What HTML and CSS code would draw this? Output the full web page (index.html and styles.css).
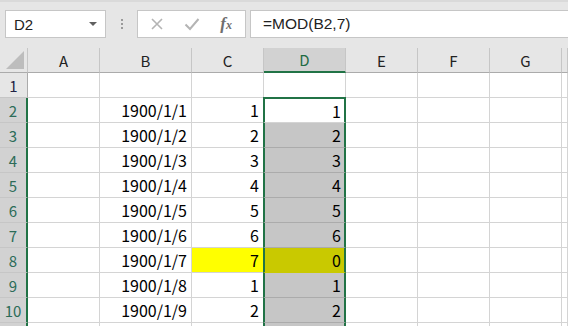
FILE: index.html
```html
<!DOCTYPE html>
<html lang="ja">
<head>
    <meta charset="UTF-8">
    <title>MOD</title>
    <link rel="stylesheet" href="styles.css">
</head>
<body>

    <div class="toolbar">
        <div class="name_box">
            <span>D2</span>
            <svg class="arrow" width="10" height="6" viewBox="0 0 10 6"><path d="M1 1h8L5 5z" fill="#606060"/></svg>
        </div>
        <div class="grip">
            <i></i><i></i><i></i>
        </div>
        <div class="fx_buttons">
            <svg width="14" height="14" viewBox="0 0 14 14"><path d="M2 2l10 10M12 2L2 12" stroke="#b4b4b4" stroke-width="1.6"/></svg>
            <svg width="16" height="14" viewBox="0 0 16 14"><path d="M1.5 7.5l4.5 4.5L14.5 2" stroke="#b4b4b4" stroke-width="2" fill="none"/></svg>
            <span class="fx">f<sub>x</sub></span>
        </div>
        <div class="formula">=MOD(B2,7)</div>
    </div>

    <div class="sheet">
        <div class="corner"><svg width="18" height="18" viewBox="0 0 18 18"><path d="M18 0V18H0z" fill="#bdbdbd"/></svg></div>
        <div class="col_head">A</div>
        <div class="col_head">B</div>
        <div class="col_head">C</div>
        <div class="col_head active">D</div>
        <div class="col_head">E</div>
        <div class="col_head">F</div>
        <div class="col_head">G</div>
        <div class="col_head"></div>

        <div class="row_head">1</div>
        <div class="cell"></div><div class="cell"></div><div class="cell"></div><div class="cell"></div>
        <div class="cell"></div><div class="cell"></div><div class="cell"></div><div class="cell"></div>

        <div class="row_head active">2</div>
        <div class="cell"></div><div class="cell">1900/1/1</div><div class="cell">1</div><div class="cell pick first">1</div>
        <div class="cell"></div><div class="cell"></div><div class="cell"></div><div class="cell"></div>

        <div class="row_head active">3</div>
        <div class="cell"></div><div class="cell">1900/1/2</div><div class="cell">2</div><div class="cell pick sel">2</div>
        <div class="cell"></div><div class="cell"></div><div class="cell"></div><div class="cell"></div>

        <div class="row_head active">4</div>
        <div class="cell"></div><div class="cell">1900/1/3</div><div class="cell">3</div><div class="cell pick sel">3</div>
        <div class="cell"></div><div class="cell"></div><div class="cell"></div><div class="cell"></div>

        <div class="row_head active">5</div>
        <div class="cell"></div><div class="cell">1900/1/4</div><div class="cell">4</div><div class="cell pick sel">4</div>
        <div class="cell"></div><div class="cell"></div><div class="cell"></div><div class="cell"></div>

        <div class="row_head active">6</div>
        <div class="cell"></div><div class="cell">1900/1/5</div><div class="cell">5</div><div class="cell pick sel">5</div>
        <div class="cell"></div><div class="cell"></div><div class="cell"></div><div class="cell"></div>

        <div class="row_head active">7</div>
        <div class="cell"></div><div class="cell">1900/1/6</div><div class="cell">6</div><div class="cell pick sel">6</div>
        <div class="cell"></div><div class="cell"></div><div class="cell"></div><div class="cell"></div>

        <div class="row_head active">8</div>
        <div class="cell"></div><div class="cell">1900/1/7</div><div class="cell yellow">7</div><div class="cell pick sel_yellow">0</div>
        <div class="cell"></div><div class="cell"></div><div class="cell"></div><div class="cell"></div>

        <div class="row_head active">9</div>
        <div class="cell"></div><div class="cell">1900/1/8</div><div class="cell">1</div><div class="cell pick sel">1</div>
        <div class="cell"></div><div class="cell"></div><div class="cell"></div><div class="cell"></div>

        <div class="row_head active">10</div>
        <div class="cell"></div><div class="cell">1900/1/9</div><div class="cell">2</div><div class="cell pick sel">2</div>
        <div class="cell"></div><div class="cell"></div><div class="cell"></div><div class="cell"></div>

        <div class="row_head active"></div>
        <div class="cell"></div><div class="cell"></div><div class="cell"></div><div class="cell pick sel"></div>
        <div class="cell"></div><div class="cell"></div><div class="cell"></div><div class="cell"></div>
    </div>

</body>
</html>
```

FILE: styles.css
```css
*,*::after,*::before{
    box-sizing: border-box;
    margin: 0;
    padding: 0;
}

body{
    width: 568px;
    height: 326px;
    overflow: hidden;
    background-color: #ffffff;
    font-family: "Noto Sans CJK JP", "Noto Sans", sans-serif;
    color: #000000;
}

.toolbar{
    display: flex;
    align-items: stretch;
    height: 48px;
    padding: 8px 0 10px 5px;
    background-color: #e6e6e6;
    border-top: 2px solid #dadada;
}

.name_box{
    display: flex;
    align-items: center;
    justify-content: space-between;
    width: 101px;
    padding: 0 7px 0 8px;
    background-color: #ffffff;
    border: 1px solid #c6c6c6;
    font-family: "Liberation Sans", sans-serif;
    font-size: 15px;
    color: #222222;
}

.grip{
    display: flex;
    flex-direction: column;
    justify-content: center;
    gap: 2px;
    width: 31px;
    align-items: center;
}

.grip i{
    display: block;
    width: 2px;
    height: 2px;
    background-color: #9a9a9a;
}

.fx_buttons{
    display: flex;
    align-items: center;
    justify-content: space-between;
    width: 109px;
    padding: 0 13px 0 12px;
    background-color: #ffffff;
    border: 1px solid #c6c6c6;
}

.fx{
    font-family: "Liberation Serif", serif;
    font-style: italic;
    font-weight: bold;
    font-size: 17px;
    color: #6e6e6e;
}

.fx sub{
    font-size: 12px;
    vertical-align: 0;
}

.formula{
    flex: 1;
    display: flex;
    align-items: center;
    margin-left: 4px;
    padding-left: 12px;
    background-color: #ffffff;
    border: 1px solid #c6c6c6;
    border-right: none;
    font-family: "Liberation Sans", sans-serif;
    font-size: 15.5px;
    color: #222222;
}

.sheet{
    display: grid;
    grid-template-columns: 28px 72px 92px 72px 82px 72px 72px 72px 6px;
    grid-template-rows: repeat(12, 25px);
    background-color: #ffffff;
}

.corner{
    display: flex;
    align-items: flex-end;
    justify-content: flex-end;
    padding: 0 3px 3px 0;
    background-color: #e6e6e6;
    border-right: 1px solid #c6c6c6;
    border-bottom: 1px solid #ababab;
}

.col_head{
    display: flex;
    align-items: center;
    justify-content: center;
    background-color: #e6e6e6;
    border-right: 1px solid #c6c6c6;
    border-bottom: 1px solid #ababab;
    font-size: 15px;
    color: #222222;
}

.col_head.active{
    background-color: #d2d2d2;
    border-bottom: 2px solid #217346;
    color: #1f6b43;
}

.row_head{
    display: flex;
    align-items: center;
    justify-content: center;
    background-color: #e6e6e6;
    border-right: 1px solid #ababab;
    border-bottom: 1px solid #c6c6c6;
    font-size: 15px;
    color: #222244;
}

.row_head.active{
    background-color: #d2d2d2;
    border-right: 2px solid #217346;
    color: #2c6c58;
}

.cell{
    display: flex;
    align-items: center;
    justify-content: flex-end;
    padding-right: 4px;
    border-right: 1px solid #d4d4d4;
    border-bottom: 1px solid #d4d4d4;
    font-size: 16px;
    line-height: 1;
}

.yellow{
    background-color: #ffff00;
}

.pick{
    margin-left: -1px;
    padding-right: 3px;
    border-left: 2px solid #217346;
    border-right: 2px solid #217346;
}

.pick.first{
    margin-top: -1px;
    border-top: 2px solid #217346;
}

.sel{
    background-color: #c6c6c6;
    border-bottom-color: #ababab;
}

.sel_yellow{
    background-color: #c9c900;
    border-bottom-color: #c9c900;
}
```
